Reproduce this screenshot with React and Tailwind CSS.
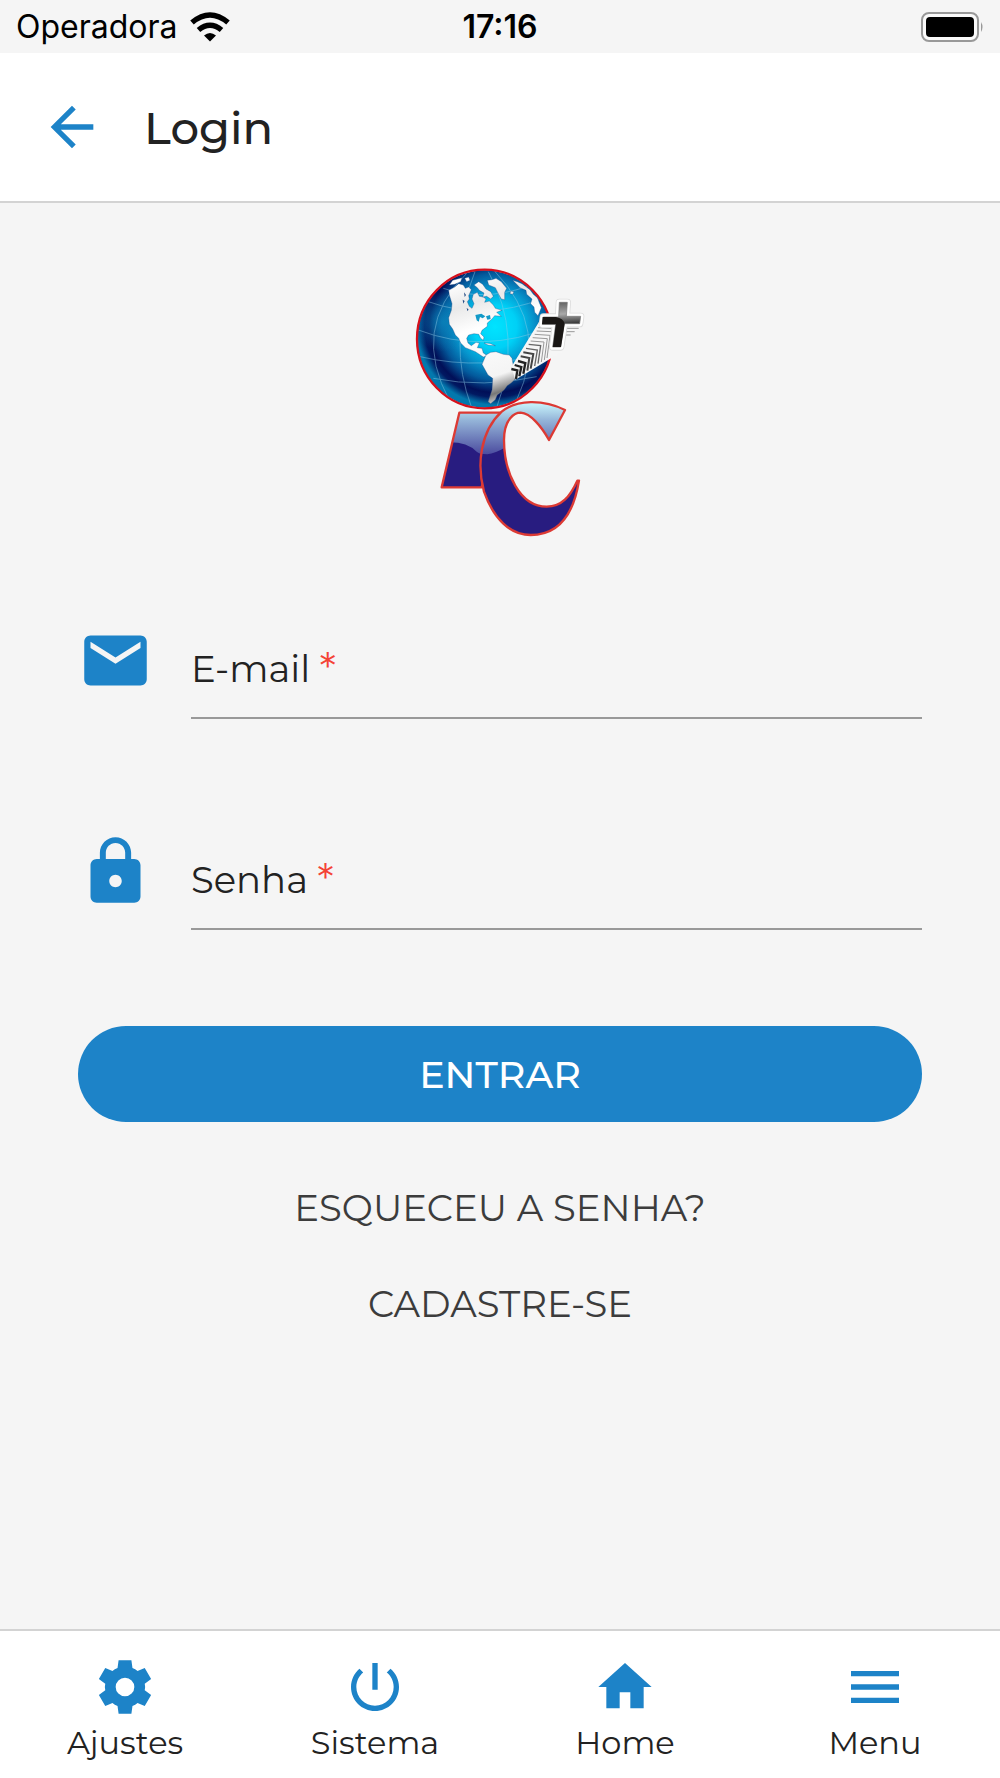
import React from "react";

const ICONS = {
  back: "M20 11H7.8l5.6-5.6L12 4l-8 8 8 8 1.4-1.4L7.8 13H20v-2z",
  mail: "M20 4H4c-1.1 0-2 .9-2 2v12c0 1.1.9 2 2 2h16c1.1 0 2-.9 2-2V6c0-1.1-.9-2-2-2zm0 4l-8 5-8-5V6l8 5 8-5v2z",
  lock: "M18 8h-1V6c0-2.76-2.24-5-5-5S7 3.24 7 6v2H6c-1.1 0-2 .9-2 2v10c0 1.1.9 2 2 2h12c1.1 0 2-.9 2-2V10c0-1.1-.9-2-2-2zm-6 9c-1.1 0-2-.9-2-2s.9-2 2-2 2 .9 2 2-.9 2-2 2zm3.1-9H8.9V6c0-1.71 1.39-3.1 3.1-3.1 1.71 0 3.1 1.39 3.1 3.1v2z",
  settings:
    "M9.600 2h4.800L14.800 4.900Q15.900 5.300 16.700 6L19.400 4.900L21.800 9L19.400 10.800Q19.700 12 19.400 13.200L21.800 15L19.400 19.100L16.700 18Q15.900 18.700 14.800 19.100L14.400 22H9.600L9.200 19.100Q8.100 18.700 7.300 18L4.600 19.100L2.200 15L4.600 13.200Q4.300 12 4.600 10.800L2.200 9L4.600 4.900L7.300 6Q8.100 5.300 9.200 4.900zM12 8.500a3.500 3.500 0 100 7 3.500 3.500 0 000-7z",
  power:
    "M13 3h-2v10h2V3zm4.83 2.17l-1.42 1.42C17.99 7.86 19 9.81 19 12c0 3.87-3.13 7-7 7s-7-3.13-7-7c0-2.19 1.01-4.14 2.58-5.42L6.17 5.17C4.23 6.82 3 9.26 3 12c0 4.97 4.03 9 9 9s9-4.03 9-9c0-2.74-1.23-5.18-3.17-6.83z",
  home: "M10 20v-6h4v6h5v-8h3L12 3 2 12h3v8z",
  menu: "M3 18h18v-2H3v2zm0-5h18v-2H3v2zm0-7v2h18V6H3z",
};

function Icon({ name, className }) {
  return (
    <svg viewBox="0 0 24 24" fill="currentColor" aria-hidden="true" className={className}>
      <path fillRule="evenodd" d={ICONS[name]} />
    </svg>
  );
}

function StatusBar() {
  return (
    <div className="grid h-[53px] grid-cols-3 items-center px-4 font-['Inter',sans-serif] text-[32px] leading-none text-black">
      <div className="flex items-center gap-3">
        <span>Operadora</span>
        <svg viewBox="0 0 40 30" className="h-[30px] w-10" role="img" aria-label="Wi-Fi">
          <g fill="none" stroke="#000" strokeWidth="5.5">
            <path d="M2 10.500Q20-4.500 38 10.500" />
            <path d="M8.500 18Q20 8.500 31.500 18" />
          </g>
          <path d="M14 23.500Q20 18.500 26 23.500L20 29.500z" />
        </svg>
      </div>
      <div className="text-center font-semibold">17:16</div>
      <svg viewBox="0 0 64 32" className="h-8 w-16 justify-self-end" role="img" aria-label="Bateria">
        <rect x="2" y="2" width="56" height="28" rx="7" fill="#fafafa" stroke="#999" strokeWidth="2" />
        <rect x="6" y="6" width="48" height="20" rx="4" />
        <path d="M61 11q3 5 0 10z" fill="#999" />
      </svg>
    </div>
  );
}

const CROSS = "M478 142h24l-3 42h43l-3 22h-46l-11 70h-24l9-68h-40l3-22h46z";
const LETTER_I = "M178 68H300L245 292H125z";
const LETTER_C =
  "M495 60C430 28 350 28 305 65C240 125 230 225 252 305C280 385 330 435 392 435C480 435 522 365 537 272H532C510 320 485 350 440 350C360 350 312 250 312 150C312 85 345 68 362 68C392 70 425 110 447 150z";

function Logo() {
  return (
    <svg viewBox="0 0 600 885" className="h-[295px] w-[200px]" role="img" aria-label="IC">
      <defs>
        <radialGradient id="sea" gradientUnits="userSpaceOnUse" cx="285" cy="215" r="235">
          <stop offset="0" stopColor="#00e4ff" />
          <stop offset=".28" stopColor="#00d0f6" />
          <stop offset=".5" stopColor="#0794cc" />
          <stop offset=".68" stopColor="#045a9c" />
          <stop offset=".84" stopColor="#021058" />
          <stop offset=".9" stopColor="#021a62" />
          <stop offset="1" stopColor="#0479ae" />
        </radialGradient>
        <radialGradient id="haze" gradientUnits="userSpaceOnUse" cx="130" cy="200" r="90">
          <stop offset="0" stopColor="#0b86bd" stopOpacity=".8" />
          <stop offset="1" stopColor="#0b86bd" stopOpacity="0" />
        </radialGradient>
        <linearGradient id="land" gradientUnits="userSpaceOnUse" x1="170" y1="80" x2="290" y2="442">
          <stop offset="0" stopColor="#fff" />
          <stop offset=".2" stopColor="#e9e9e9" />
          <stop offset=".4" stopColor="#fff" />
          <stop offset=".8" stopColor="#f4f4f4" />
          <stop offset=".93" stopColor="#777" />
          <stop offset="1" stopColor="#ccc" />
        </linearGradient>
        <linearGradient id="letter" gradientUnits="userSpaceOnUse" x1="0" y1="35" x2="0" y2="195">
          <stop offset="0" stopColor="#ccfaff" />
          <stop offset=".35" stopColor="#94b4d8" />
          <stop offset="1" stopColor="#4a4a9e" />
        </linearGradient>
        <linearGradient id="lit" gradientUnits="userSpaceOnUse" x1="490" y1="142" x2="494" y2="212">
          <stop offset="0" stopColor="#666" />
          <stop offset=".5" stopColor="#aaa" />
          <stop offset=".75" stopColor="#666" />
          <stop offset="1" stopColor="#222" />
        </linearGradient>
        <clipPath id="disc">
          <ellipse cx="254" cy="252" rx="202" ry="206" />
        </clipPath>
        <clipPath id="shapeI">
          <path d={LETTER_I} />
        </clipPath>
        <clipPath id="shapeC">
          <path d={LETTER_C} />
        </clipPath>
      </defs>

      <g clipPath="url(#disc)">
        <rect width="500" height="500" fill="url(#sea)" />
        <rect width="500" height="500" fill="url(#haze)" />
        <g fill="none" stroke="#8fcbe6" strokeWidth="2.5" opacity=".55">
          <path d="M85 140Q250 200 430 130M55 225Q250 300 455 215M60 305Q250 350 455 290M100 370Q250 400 410 365M130 100Q250 140 380 95" />
          <path d="M200 55Q30 220 150 440M225 50Q140 260 215 458M265 50Q370 240 290 458M285 50Q450 220 350 435" />
        </g>
        <g fill="url(#land)" stroke="#1a3f7c" strokeWidth="1" strokeLinejoin="round">
          <path d="M146 106L164 96L176 86L190 90L196 100L206 96L214 104L206 122L208 132L202 140L208 154L216 160L222 146L216 132L220 118L232 112L238 124L250 126L258 132L254 142L268 138L280 150L286 160L306 166L290 172L304 184L284 182L276 192L262 204L262 214L246 226L242 236L252 246L250 256L242 250L236 238L222 236L206 240L200 250L204 264L214 272L228 262L238 264L232 278L246 280L250 294L262 302L250 306L226 290L196 278L182 264L176 250L166 240L158 222L148 208L146 188L154 166L156 146L148 120z" />
          <path d="M262 76L276 74L288 70L304 80L320 100L314 112L314 134L304 132L296 118L286 98L266 90z" />
          <path d="M222 90L236 80L248 88L258 102L272 110L280 124L272 132L260 124L248 126L252 114L238 106L232 98z" />
          <path d="M148 90L158 76L186 68L182 80L164 88z" />
          <path d="M194 70L206 66L210 76L200 80zM332 108L342 110L338 118L330 116z" />
          <path d="M338 76L352 80L366 86L390 104L400 118L412 128L424 158L414 182L404 172L402 156L392 146L396 132L380 118L378 106L360 98L350 88z" />
          <path d="M252 264Q270 262 286 272L264 270z" />
          <path d="M258 300L272 292L288 290L310 298L328 300L336 310L340 332L352 346L346 372L334 384L322 392L312 406L292 420L286 434L272 446L264 440L276 404L278 370L264 360L256 346L246 328z" />
        </g>
        <path d="M226 180L244 176L256 184L248 190L240 186L236 200L230 196zM258 184L270 180L272 192L262 194z" fill="#129ac8" />
        <path d="M192 112l6 8-4 6zM188 134l6 4-4 8zM200 158l6 6-4 4z" fill="#274d86" />
      </g>
      <ellipse cx="254" cy="252" rx="203" ry="208" fill="none" stroke="#d5101c" strokeWidth="7" />

      <path d="M420 196L334 336L346 374L486 290L500 240L548 214L540 180z" fill="#f6f6f6" />
      <g fill="none" strokeWidth="4" strokeLinejoin="miter">
        <path stroke="#222" strokeWidth="7" d="M334 342l18 4-4 26M344 330l20 6-6 28M354 318l22 6-6 32" />
        <path stroke="#444" strokeWidth="6" d="M362 304l26 5-6 38M370 292l30 5-8 44" />
        <path stroke="#666" d="M378 280l34 5-8 48M386 268l36 4-8 54" />
        <path stroke="#999" strokeWidth="3" d="M392 258l40 3-8 60M398 248l44 3-9 64M404 238l46 3-9 68M410 228l44 2M414 218l40 2M498 220h38M496 230h28M494 240h18" />
      </g>
      <path d={CROSS} fill="none" stroke="#ddd" strokeWidth="22" strokeLinejoin="round" />
      <path d={CROSS} fill="none" stroke="#fff" strokeWidth="17" strokeLinejoin="round" />
      <path d={CROSS} fill="url(#lit)" stroke="#777" strokeWidth="2" />
      <path d="M428 186h40q22 4 26 20l-11 70h-24l9-68h-42z" fill="#1a1715" />

      <g transform="translate(0 405)" strokeLinejoin="round">
        <g clipPath="url(#shapeI)">
          <rect width="600" height="480" fill="#281c80" />
          <path d="M100 30H600V180H320Q255 205 230 185Q190 145 100 162z" fill="url(#letter)" />
        </g>
        <path d={LETTER_I} fill="none" stroke="#dc3a34" strokeWidth="7" />
        <g clipPath="url(#shapeC)">
          <rect width="600" height="480" fill="#281c80" />
          <path d="M200 20H600V170H320Q285 190 262 193L230 190z" fill="url(#letter)" />
        </g>
        <path d={LETTER_C} fill="none" stroke="#dc3a34" strokeWidth="7" />
      </g>
    </svg>
  );
}

function Field({ id, label, type, icon }) {
  return (
    <div className="flex items-start gap-[38px]">
      <Icon name={icon} className="size-[75px] shrink-0 text-[#1d83c8]" />
      <div className="relative flex-1">
        <label htmlFor={id} className="absolute top-4 left-0 flex gap-2 text-[37px] leading-[60px]">
          {label}
          <span className="font-['Inter',sans-serif] text-[38px] leading-[54px] font-light text-[#f44336]">*</span>
        </label>
        <input
          id={id}
          type={type}
          required
          className="block h-24 w-full border-b-2 border-[#999] bg-transparent pt-4 text-[37px] outline-none"
        />
      </div>
    </div>
  );
}

const TABS = [
  { icon: "settings", label: "Ajustes" },
  { icon: "power", label: "Sistema" },
  { icon: "home", label: "Home" },
  { icon: "menu", label: "Menu" },
];

export default function App() {
  return (
    <div className="flex min-h-screen flex-col bg-[#f5f5f5] font-['Montserrat','Inter',sans-serif] text-[#222]">
      <StatusBar />
      <header className="flex h-[150px] items-center gap-10 border-b-2 border-[#d3d3d3] bg-white px-10">
        <button type="button" aria-label="Voltar" className="text-[#1d83c8]">
          <Icon name="back" className="size-16" />
        </button>
        <h1 className="text-[45px] leading-none font-medium">Login</h1>
      </header>

      <main className="flex flex-1 flex-col px-[78px] pt-[52px]">
        <div className="flex justify-center">
          <Logo />
        </div>
        <form className="mt-[73px] flex flex-col" onSubmit={(e) => e.preventDefault()}>
          <div className="flex flex-col gap-[115px]">
            <Field id="email" label="E-mail" type="email" icon="mail" />
            <Field id="senha" label="Senha" type="password" icon="lock" />
          </div>
          <button type="submit" className="mt-24 h-24 rounded-full bg-[#1d83c8] text-[38px] font-medium text-white">
            ENTRAR
          </button>
        </form>
        <nav className="mt-[38px] flex flex-col items-center text-[37px] leading-[96px] text-[#3c3c3c]">
          <a href="#esqueceu">ESQUECEU A SENHA?</a>
          <a href="#cadastro">CADASTRE-SE</a>
        </nav>
      </main>

      <nav className="grid h-[149px] grid-cols-4 border-t-2 border-[#d3d3d3] bg-white">
        {TABS.map((tab) => (
          <button key={tab.label} type="button" className="flex flex-col items-center pt-6">
            <Icon name={tab.icon} className="size-16 text-[#1d83c8]" />
            <span className="text-[32px] leading-[48px]">{tab.label}</span>
          </button>
        ))}
      </nav>
    </div>
  );
}
